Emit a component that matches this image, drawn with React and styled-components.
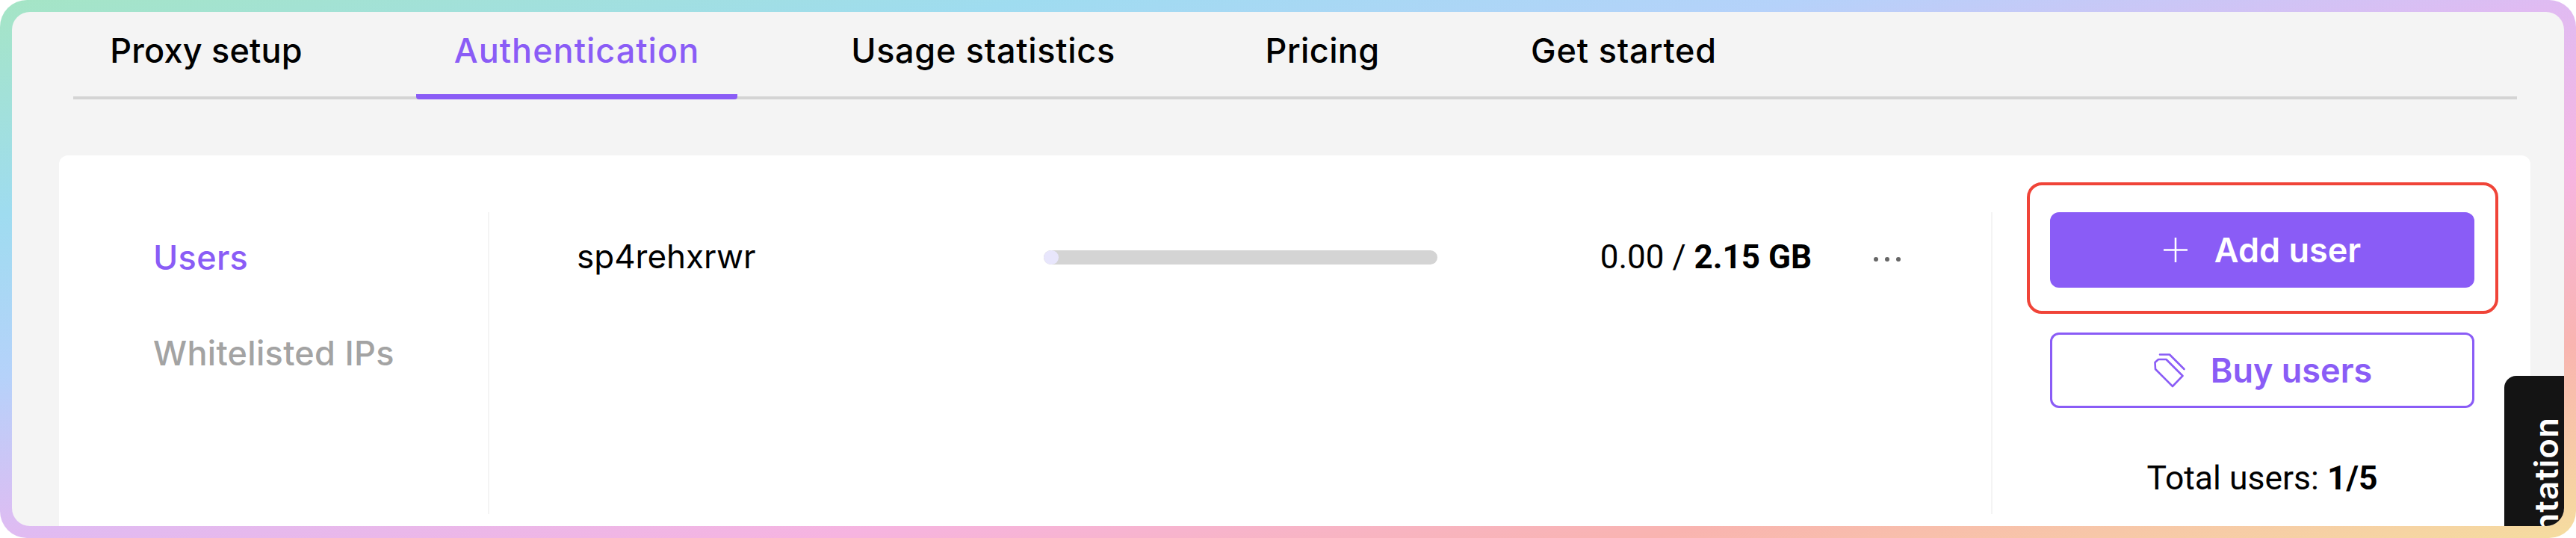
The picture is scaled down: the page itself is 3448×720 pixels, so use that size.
import styled, { createGlobalStyle } from 'styled-components'

const purple = '#8a5cf6'

const GlobalStyle = createGlobalStyle`
  html, body {
    margin: 0;
    background: #ffffff;
  }
`

const Frame = styled.div`
  box-sizing: border-box;
  width: 3448px;
  height: 720px;
  padding: 16px;
  border-radius: 36px;
  background: linear-gradient(
    to bottom right,
    #a5e5c5 0%,
    #9fdcf0 20%,
    #b5d2fa 35%,
    #e0bbf2 50%,
    #f6b4e0 66%,
    #f9b4b0 82%,
    #f5dd9f 100%
  );
`

const Inner = styled.div`
  position: relative;
  height: 688px;
  display: flex;
  flex-direction: column;
  overflow: hidden;
  border-radius: 24px;
  background: #f4f4f4;
`

const TabBar = styled.nav`
  box-sizing: border-box;
  display: flex;
  gap: 103px;
  height: 117px;
  margin: 0 63px 75px 82px;
  border-bottom: 4px solid #d4d4d4;
`

const Tab = styled.div`
  box-sizing: border-box;
  width: ${({ $width }) => $width}px;
  height: 117px;
  padding-top: 27px;
  border-bottom: 7px solid ${({ $active }) => ($active ? purple : 'transparent')};
  border-radius: 4px;
  font-family: Inter, sans-serif;
  font-size: 45px;
  font-weight: 500;
  letter-spacing: ${({ $spacing }) => $spacing}px;
  line-height: 50px;
  text-align: center;
  white-space: nowrap;
  color: ${({ $active }) => ($active ? purple : '#000000')};
`

const Card = styled.section`
  box-sizing: border-box;
  flex: 1;
  display: flex;
  margin: 0 45px 0 63px;
  padding: 76px 0 16px;
  border-radius: 12px 12px 0 0;
  background: #ffffff;
`

const SideNav = styled.div`
  box-sizing: border-box;
  width: 576px;
  padding: 36px 0 0 126px;
  display: flex;
  flex-direction: column;
  gap: 78px;
  border-right: 2px solid #f4f4f4;
`

const SideItem = styled.div`
  font-family: Inter, sans-serif;
  font-size: 45px;
  font-weight: 500;
  letter-spacing: 0.3px;
  line-height: 50px;
  white-space: nowrap;
  color: ${({ $active }) => ($active ? purple : '#a3a3a3')};
`

const Main = styled.div`
  box-sizing: border-box;
  flex: 1;
  padding: 20px 0 0 117px;
`

const UserRow = styled.div`
  display: flex;
  align-items: center;
  height: 80px;
`

const UserName = styled.div`
  width: 625px;
  margin-top: -3px;
  font-family: Inter, sans-serif;
  font-size: 44px;
  line-height: 50px;
  color: #000000;
`

const Track = styled.div`
  width: 527px;
  height: 19px;
  border-radius: 10px;
  overflow: hidden;
  background: #d4d4d4;
`

const Fill = styled.div`
  height: 100%;
  border-radius: 10px;
  background: #e8e6fc;
`

const Usage = styled.div`
  width: 501px;
  text-align: right;
  font-family: Roboto, sans-serif;
  font-size: 44px;
  line-height: 50px;
  color: #000000;

  strong {
    font-weight: 700;
  }
`

const Dots = styled.div`
  display: flex;
  gap: 9px;
  margin-left: 83px;
  margin-top: 6px;

  span {
    width: 6px;
    height: 6px;
    border-radius: 50%;
    background: #666666;
  }
`

const Side = styled.aside`
  box-sizing: border-box;
  width: 722px;
  padding: 0 75px 0 77px;
  border-left: 2px solid #f4f4f4;
  display: flex;
  flex-direction: column;
`

const Highlighted = styled.div`
  position: relative;
  margin-bottom: 60px;
`

const RedBox = styled.div`
  position: absolute;
  inset: -40px -32px -35px -31px;
  border: 4px solid #f04438;
  border-radius: 20px;
`

const Button = styled.button`
  box-sizing: border-box;
  width: 100%;
  height: 101px;
  display: flex;
  align-items: center;
  justify-content: center;
  gap: ${({ $outline }) => ($outline ? '33px' : '36px')};
  border: 3px solid ${purple};
  border-radius: 12px;
  background: ${({ $outline }) => ($outline ? '#ffffff' : purple)};
  color: ${({ $outline }) => ($outline ? purple : '#ffffff')};
  font-family: Inter, sans-serif;
  font-size: 45px;
  font-weight: 600;
`

const TotalUsers = styled.div`
  margin-top: 69px;
  text-align: center;
  font-family: Roboto, sans-serif;
  font-size: 44.5px;
  line-height: 50px;
  color: #000000;

  strong {
    font-weight: 700;
  }
`

const DocTab = styled.div`
  position: absolute;
  top: 487px;
  right: 0;
  box-sizing: border-box;
  width: 80px;
  height: 300px;
  padding: 55px 0 0 28px;
  border-radius: 16px 0 0 0;
  background: #141414;
  color: #ffffff;
  font-family: Inter, sans-serif;
  font-size: 44px;
  font-weight: 600;
  letter-spacing: 1px;
  line-height: 48px;
  white-space: nowrap;
  writing-mode: vertical-rl;

  span {
    display: block;
    height: max-content;
    transform: rotate(180deg);
  }
`

function PlusIcon() {
  return (
    <svg width="32" height="33" viewBox="0 0 32 33" fill="none" stroke="#ffffff" strokeWidth="2.5">
      <path d="M16 0V33M0 16.5H32" />
    </svg>
  )
}

function TagsIcon() {
  return (
    <svg
      width="45"
      height="52"
      viewBox="25 30 45 52"
      fill="none"
      stroke={purple}
      strokeWidth="2.6"
      strokeLinejoin="round"
      strokeLinecap="round"
    >
      <path d="M28.5 45L33 41H43.5L65.5 63L52 77L29 54Z" />
      <path d="M35 34.5H48L67.5 54" />
    </svg>
  )
}

const tabs = [
  { label: 'Proxy setup', width: 356, spacing: 0.2 },
  { label: 'Authentication', width: 430, spacing: 1 },
  { label: 'Usage statistics', width: 452, spacing: 0.7 },
  { label: 'Pricing', width: 250, spacing: 0.4 },
  { label: 'Get started', width: 351, spacing: 0.8 },
]

export default function App() {
  return (
    <>
      <GlobalStyle />
      <Frame>
        <Inner>
          <TabBar>
            {tabs.map((tab) => (
              <Tab
                key={tab.label}
                $width={tab.width}
                $spacing={tab.spacing}
                $active={tab.label === 'Authentication'}
              >
                {tab.label}
              </Tab>
            ))}
          </TabBar>
          <Card>
            <SideNav>
              <SideItem $active>Users</SideItem>
              <SideItem>Whitelisted IPs</SideItem>
            </SideNav>
            <Main>
              <UserRow>
                <UserName>sp4rehxrwr</UserName>
                <Track>
                  <Fill style={{ width: `${(20 / 527) * 100}%` }} />
                </Track>
                <Usage>
                  0.00 / <strong>2.15 GB</strong>
                </Usage>
                <Dots>
                  <span />
                  <span />
                  <span />
                </Dots>
              </UserRow>
            </Main>
            <Side>
              <Highlighted>
                <Button>
                  <PlusIcon />
                  Add user
                </Button>
                <RedBox />
              </Highlighted>
              <Button $outline>
                <TagsIcon />
                Buy users
              </Button>
              <TotalUsers>
                Total users: <strong>1/5</strong>
              </TotalUsers>
            </Side>
          </Card>
          <DocTab>
            <span>Documentation</span>
          </DocTab>
        </Inner>
      </Frame>
    </>
  )
}
